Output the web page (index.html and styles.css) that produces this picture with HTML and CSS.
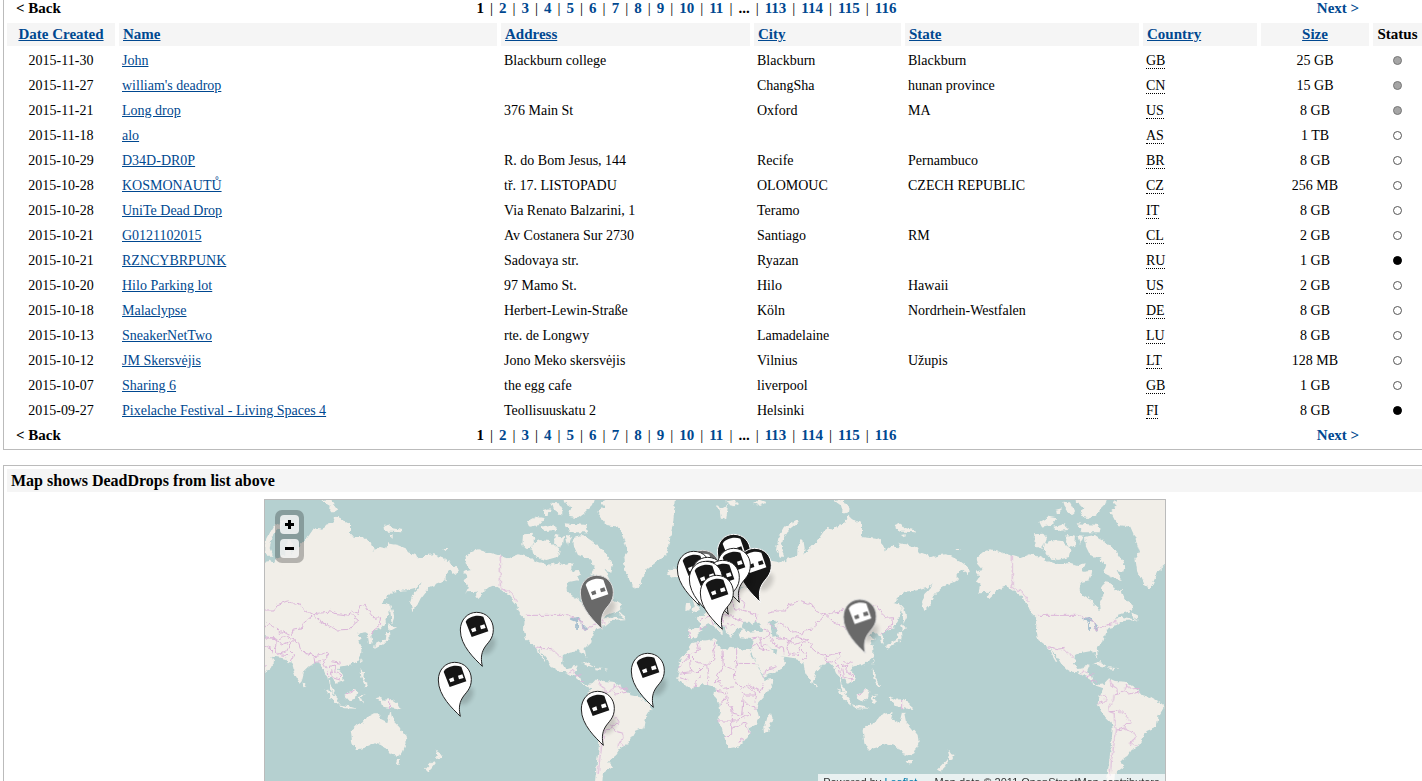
FILE: index.html
```html
<!DOCTYPE html>
<html lang="en">
<head>
<meta charset="utf-8">
<title>DeadDrops</title>
<link rel="stylesheet" href="styles.css">
</head>
<body>
<main class="page">
<section class="panel panel-list">
<nav class="pager"><span class="back">&lt; Back</span><span class="pages"><b>1</b><i>|</i><a href="#">2</a><i>|</i><a href="#">3</a><i>|</i><a href="#">4</a><i>|</i><a href="#">5</a><i>|</i><a href="#">6</a><i>|</i><a href="#">7</a><i>|</i><a href="#">8</a><i>|</i><a href="#">9</a><i>|</i><a href="#">10</a><i>|</i><a href="#">11</a><i>|</i><b>...</b><i>|</i><a href="#">113</a><i>|</i><a href="#">114</a><i>|</i><a href="#">115</a><i>|</i><a href="#">116</a></span><a class="next" href="#">Next &gt;</a></nav>
<table class="drops">
<colgroup><col class="c-date"><col class="c-name"><col class="c-addr"><col class="c-city"><col class="c-state"><col class="c-country"><col class="c-size"><col class="c-status"></colgroup>
<thead><tr><th><a href="#">Date Created</a></th><th><a href="#">Name</a></th><th><a href="#">Address</a></th><th><a href="#">City</a></th><th><a href="#">State</a></th><th><a href="#">Country</a></th><th><a href="#">Size</a></th><th>Status</th></tr></thead>
<tbody>
<tr><td>2015-11-30</td><td><a href="#">John</a></td><td>Blackburn college</td><td>Blackburn</td><td>Blackburn</td><td><abbr>GB</abbr></td><td>25 GB</td><td><span class="dot gray"></span></td></tr>
<tr><td>2015-11-27</td><td><a href="#">william's deadrop</a></td><td></td><td>ChangSha</td><td>hunan province</td><td><abbr>CN</abbr></td><td>15 GB</td><td><span class="dot gray"></span></td></tr>
<tr><td>2015-11-21</td><td><a href="#">Long drop</a></td><td>376 Main St</td><td>Oxford</td><td>MA</td><td><abbr>US</abbr></td><td>8 GB</td><td><span class="dot gray"></span></td></tr>
<tr><td>2015-11-18</td><td><a href="#">alo</a></td><td></td><td></td><td></td><td><abbr>AS</abbr></td><td>1 TB</td><td><span class="dot"></span></td></tr>
<tr><td>2015-10-29</td><td><a href="#">D34D-DR0P</a></td><td>R. do Bom Jesus, 144</td><td>Recife</td><td>Pernambuco</td><td><abbr>BR</abbr></td><td>8 GB</td><td><span class="dot"></span></td></tr>
<tr><td>2015-10-28</td><td><a href="#">KOSMONAUTŮ</a></td><td>tř. 17. LISTOPADU</td><td>OLOMOUC</td><td>CZECH REPUBLIC</td><td><abbr>CZ</abbr></td><td>256 MB</td><td><span class="dot"></span></td></tr>
<tr><td>2015-10-28</td><td><a href="#">UniTe Dead Drop</a></td><td>Via Renato Balzarini, 1</td><td>Teramo</td><td></td><td><abbr>IT</abbr></td><td>8 GB</td><td><span class="dot"></span></td></tr>
<tr><td>2015-10-21</td><td><a href="#">G0121102015</a></td><td>Av Costanera Sur 2730</td><td>Santiago</td><td>RM</td><td><abbr>CL</abbr></td><td>2 GB</td><td><span class="dot"></span></td></tr>
<tr><td>2015-10-21</td><td><a href="#">RZNCYBRPUNK</a></td><td>Sadovaya str.</td><td>Ryazan</td><td></td><td><abbr>RU</abbr></td><td>1 GB</td><td><span class="dot black"></span></td></tr>
<tr><td>2015-10-20</td><td><a href="#">Hilo Parking lot</a></td><td>97 Mamo St.</td><td>Hilo</td><td>Hawaii</td><td><abbr>US</abbr></td><td>2 GB</td><td><span class="dot"></span></td></tr>
<tr><td>2015-10-18</td><td><a href="#">Malaclypse</a></td><td>Herbert-Lewin-Straße</td><td>Köln</td><td>Nordrhein-Westfalen</td><td><abbr>DE</abbr></td><td>8 GB</td><td><span class="dot"></span></td></tr>
<tr><td>2015-10-13</td><td><a href="#">SneakerNetTwo</a></td><td>rte. de Longwy</td><td>Lamadelaine</td><td></td><td><abbr>LU</abbr></td><td>8 GB</td><td><span class="dot"></span></td></tr>
<tr><td>2015-10-12</td><td><a href="#">JM Skersvėjis</a></td><td>Jono Meko skersvėjis</td><td>Vilnius</td><td>Užupis</td><td><abbr>LT</abbr></td><td>128 MB</td><td><span class="dot"></span></td></tr>
<tr><td>2015-10-07</td><td><a href="#">Sharing 6</a></td><td>the egg cafe</td><td>liverpool</td><td></td><td><abbr>GB</abbr></td><td>1 GB</td><td><span class="dot"></span></td></tr>
<tr><td>2015-09-27</td><td><a href="#">Pixelache Festival - Living Spaces 4</a></td><td>Teollisuuskatu 2</td><td>Helsinki</td><td></td><td><abbr>FI</abbr></td><td>8 GB</td><td><span class="dot black"></span></td></tr>
</tbody>
</table>
<nav class="pager pager-bottom"><span class="back">&lt; Back</span><span class="pages"><b>1</b><i>|</i><a href="#">2</a><i>|</i><a href="#">3</a><i>|</i><a href="#">4</a><i>|</i><a href="#">5</a><i>|</i><a href="#">6</a><i>|</i><a href="#">7</a><i>|</i><a href="#">8</a><i>|</i><a href="#">9</a><i>|</i><a href="#">10</a><i>|</i><a href="#">11</a><i>|</i><b>...</b><i>|</i><a href="#">113</a><i>|</i><a href="#">114</a><i>|</i><a href="#">115</a><i>|</i><a href="#">116</a></span><a class="next" href="#">Next &gt;</a></nav>
</section>
<section class="panel panel-map">
<h2 class="map-title">Map shows DeadDrops from list above</h2>
<div class="map">
<svg class="map-svg" viewBox="265 500 900 291" role="img" aria-label="World map with dead drop pins">
<defs>
<filter id="coast" x="-5%" y="-5%" width="110%" height="110%"><feTurbulence type="fractalNoise" baseFrequency="0.22" numOctaves="2" seed="4" result="n"/><feDisplacementMap in="SourceGraphic" in2="n" scale="5" xChannelSelector="R" yChannelSelector="G"/></filter>
<filter id="soft" x="-50%" y="-50%" width="200%" height="200%"><feGaussianBlur stdDeviation="6"/></filter>
<g id="world">
<g transform="translate(660 495) scale(.33333)">
<g fill="#f1eee8">
<path d="M84 432L86 398L118 401L121 385L106 368L128 362L148 342L160 330L165 305L174 298L174 325L205 328L215 318L218 300L232 282L255 277L228 272L220 262L222 240L238 225L232 213L220 225L205 245L198 265L200 285L190 305L182 312L175 290L160 287L148 287L147 262L165 240L185 200L210 172L240 162L262 172L300 190L315 205L333 197L350 200L365 197L378 202L385 188L400 183L412 182L412 160L420 138L430 134L434 160L430 180L440 190L424 203L420 215L434 218L442 200L452 188L445 170L462 168L455 155L478 128L498 100L523 105L533 90L553 85L563 62L580 75L606 85V480H400L370 478L350 463L335 462L322 450L350 480L372 486L378 505L360 522L340 535L310 545L300 525L285 495L272 468L275 450L278 432L240 430L236 415L250 405L238 400L225 408L212 428L200 415L192 395L172 385L160 378L165 388L188 408L188 420L175 405L160 392L145 388L130 395L125 405L112 420L105 433Z"/>
<path d="M97 440L120 438L160 433L172 435L168 448L185 460L205 465L212 455L230 460L255 465L270 462L272 480L290 505L300 530L312 554L341 552L338 567L315 600L295 622L290 640L298 670L290 685L270 695L268 715L255 735L235 755L205 760L195 735L185 700L172 675L180 650L178 625L162 605L165 585L155 572L130 568L105 580L85 580L65 560L52 548L58 520L55 505L70 480L85 465L90 450Z"/>
<path d="M333 655L338 670L325 710L312 715L310 695L318 672ZM20 235L35 222L60 220L75 235L60 245L40 248ZM348 165L355 130L375 95L412 73L416 80L385 105L370 130L365 160L376 185L360 185ZM95 300L110 295L106 320L120 345L92 352L104 335ZM78 325L90 320L92 342L76 345ZM168 30L190 38L204 30L198 78L185 70L182 45ZM195 20L225 14L236 26L222 34L208 30ZM280 25L300 15L318 22L300 30ZM520 15L550 12L558 40L570 45L562 52L546 52L548 35Z"/>
</g>
<g fill="#b5d0d0"><path d="M245 400L250 380L268 380L275 388L290 378L305 395L308 408L285 408L262 411ZM324 382L340 373L355 380L343 388L350 405L354 425L338 428L334 405Z"/></g>
</g>
<g fill="#f1eee8" transform="translate(776 495) scale(.33333)">
<path d="M60 200L105 155L135 125L150 100L175 105L185 90L205 85L215 62L232 75L258 85L258 105L240 120L222 142L250 122L275 125L300 128L318 140L330 167L345 155L365 160L372 145L400 150L425 160L432 172L455 180L460 190L490 180L510 178L540 190L565 208L585 225L575 240L555 225L545 238L545 255L535 262L500 275L485 290L470 310L460 330L445 348L438 325L445 300L460 285L470 265L455 278L430 285L385 290L370 305L352 324L376 330L378 345L365 380L350 400L335 405L320 412L326 445L315 445L312 425L303 412L285 415L278 425L297 430L283 436L292 460L292 480L280 500L262 508L245 512L228 515L222 525L235 535L240 555L225 560L215 567L205 550L195 545L196 568L205 578L215 600L205 595L195 573L190 545L180 535L170 510L158 500L150 505L135 515L120 530L115 550L108 568L95 545L85 520L82 500L75 505L65 492L50 488L0 482Z"/>
<path d="M378 330L386 342L390 366L383 387L380 360ZM372 388L396 398L378 408ZM375 410L377 430L360 445L330 461L332 450L348 442L365 433L368 412ZM260 705L275 690L300 680L310 665L330 655L350 655L345 672L370 685L378 652L384 650L390 680L405 695L425 720L428 745L415 775L400 782L380 778L365 755L330 745L300 758L275 764L265 745ZM392 795L408 795L402 810ZM515 763L525 776L536 780L525 795L516 793L519 778ZM511 795L515 805L495 830L485 822ZM183 580L202 592L226 620L222 630L205 615ZM222 628L262 635L282 641L240 640ZM242 598L260 590L270 578L280 590L275 610L255 618L244 612ZM285 603L305 598L292 608L300 625L287 620ZM290 522L300 532L298 548L312 572L304 574L292 550ZM335 610L345 607L360 614L382 612L400 625L412 645L385 640L355 635L350 620ZM115 562L126 575L118 577ZM293 490L296 498L290 508ZM358 90L375 86L385 100L416 105L415 112L385 110L372 110L360 104ZM538 162L555 162L545 168ZM175 15L202 18L224 45L208 55L200 28ZM375 120L386 118L386 128ZM0 490L30 498L20 520L0 530Z"/>
</g>
<g transform="translate(990 495) scale(.33333)">
<g fill="#f1eee8">
<path d="M-40 187L-20 170L0 163L25 170L67 182L90 190L120 178L150 185L180 200L210 210L240 203L262 210L284 205L278 225L305 238L298 256L270 262L265 285L280 300L305 315L320 340L332 345L330 320L340 300L336 275L345 262L365 265L378 287L395 285L405 315L428 330L430 345L410 352L385 360L376 372L397 365L442 374L425 362L425 352L440 362L442 376L398 378L380 393L355 400L345 415L340 440L320 460L325 490L315 475L300 466L275 470L255 480L252 505L262 522L280 520L287 510L299 512L290 533L304 545L309 562L325 570L340 568L357 550L375 558L405 560L435 578L455 600L480 605L518 628L520 640L505 665L500 695L470 708L455 735L440 757L425 765L415 780L390 800L402 815L375 835L372 870L350 870L355 820L362 760L368 700L365 685L345 665L323 625L330 600L340 580L318 572L302 556L285 542L265 532L245 530L220 515L205 490L180 460L202 500L197 500L172 455L165 450L145 435L138 405L140 370L125 355L115 330L90 300L60 280L45 272L30 278L10 300L0 310L-8 302L0 290L12 280L25 273L0 290L-35 292L-30 270L-43 262L-32 245L-45 230L-20 225L-37 205Z"/>
<path d="M361 50L380 35L366 20L396 5L591 5L586 80L576 130L566 175L536 200L506 225L481 282L461 270L441 225L436 190L450 170L436 130L421 95L386 90L374 75ZM135 118L160 116L170 130L160 155L145 162L133 150ZM165 145L185 135L215 138L245 165L240 185L205 195L175 188L160 165ZM285 125L315 120L345 140L375 165L405 210L400 230L380 225L395 255L370 250L340 235L350 215L330 190L300 180L288 155ZM148 80L175 65L200 70L185 90L155 95ZM190 95L225 88L235 105L200 108ZM260 85L325 90L330 112L275 112ZM255 0L355 0L345 30L320 55L300 70L270 65L280 35L258 22ZM220 20L240 22L255 50L245 60L228 45ZM195 45L215 40L212 60L198 60ZM230 120L258 125L255 150L240 160L228 145ZM262 120L280 122L270 150ZM280 228L300 225L310 238L290 243ZM310 505L330 502L352 517L335 514ZM355 517L376 519L370 524L355 523ZM380 520L390 521L382 524Z"/>
</g>
<path fill="#a7c0cf" d="M275 370L300 366L312 380L300 378L300 405L294 404L295 382L280 376ZM310 382L328 400L320 408L312 395Z"/>
</g>
</g>
<g id="borders" fill="none" stroke="#dbb5d9" stroke-width="3" stroke-linejoin="round">
<g transform="translate(776 495) scale(.33333)">
<path d="M-24 355L0 348L30 348L38 330L70 318L95 328L105 325L120 345L148 360L118 385L115 402L85 405L78 420L60 410L45 412L35 400L12 385L0 400L-25 385M148 360L160 355L192 352L197 343L213 355L250 360L265 350L282 355L290 335L302 331L318 355L330 370L350 368L345 395L330 405L318 418M148 360L165 375L185 388L220 405L255 403L270 385L285 375L265 360M0 430L30 428L38 440L60 425L78 430L92 435L75 450L68 470L40 478L33 460L38 435M92 435L105 445L108 460L125 475L150 482L172 478L190 472L192 485L175 498L190 520L195 545M78 465L92 480L82 498M150 485L152 502L168 500M195 515L215 510L212 530L230 540L228 555L205 548L200 520M202 500L230 505M377 612V640M245 600L272 585"/>
</g>
<g transform="translate(660 495) scale(.33333)">
<path d="M86 408L92 432M118 402L140 398M120 375L150 362L160 390M150 362L152 345M168 328L172 350L190 360L215 360L222 375L240 370L250 385M190 360L185 385L200 400L205 385L225 395M215 318L225 345L250 345L265 350L290 358L290 380M232 282L240 310L255 325L250 345M240 270L245 230L240 180M170 310L165 280L185 240L225 190M310 405L330 410L325 425L278 432M300 432L305 455L322 450M275 455L290 445L300 460L330 470M330 428L345 450L370 460L372 475M352 425L385 432L400 450L425 440M310 545L315 525L350 515M114 440L118 465L70 485M165 440L160 460L165 490L140 512L110 500L90 480L55 520M185 462L190 510L175 540L165 560M230 460V505L285 506M230 505L222 550L240 575L265 575L290 600L285 620M190 510L222 525M88 485L92 530L58 535M92 530L110 535L130 515L140 512L145 540L140 568M105 580L110 550L125 545M60 548L85 558M165 560L180 560L190 580L222 575M165 585L190 590L200 605L180 630M200 590L205 610L200 625L215 635L220 655L245 660L250 600L240 575M250 600L275 600L290 600M250 615L270 635L290 640M172 678H232L245 668L270 660L268 650M215 635L218 680M215 680V715L205 725L192 725M215 700L240 690L255 682L262 700L268 715M240 735L247 732L245 740L238 738ZM312 565L300 590L265 570M400 480L425 482"/>
</g>
<g transform="translate(990 495) scale(.33333)">
<path d="M67 182V278L85 290L90 283L117 318M145 361H265L290 370L312 380L318 405L345 392L370 385L375 372L382 388M172 455L205 462L220 460L235 475L250 488M275 535L283 525L290 535M290 545L310 538M305 560L320 556M360 555L365 570L380 580L382 598L372 600L370 620L355 635L358 650L390 648L410 665L422 678L422 688L402 688L402 700L380 705M330 600L350 605L345 620L325 625M382 598L400 590L410 570M410 570L425 582L445 580V592L415 597L405 590M358 650L372 655L375 690L380 705L372 745L365 790L360 840M402 700L420 710L435 715L438 730L425 738L440 755M425 738L420 755"/>
</g>
</g>
<path id="hood" d="M17 29C24 15 50 6 70 14L85 58L35 75Z"/>
<path id="drop" d="M50 1C80 1 100 24 100 52C100 82 83 91 73 108C62 126 63 145 67 163C45 141 1 102 1 54C1 24 22 1 50 1Z"/>
<path id="eyes" d="M33 51L46 46L49 57L37 61ZM60 41L73 37L77 48L63 52Z"/>
<ellipse id="shade" cx="84" cy="102" rx="18" ry="30" transform="rotate(35 84 102)" fill="#000" opacity=".16" filter="url(#soft)"/>
<g id="pin-white"><use href="#shade"/><use href="#drop" fill="#fff" stroke="#222" stroke-width="3"/><use href="#hood" fill="#161616"/><use href="#eyes" fill="#fff"/></g>
<g id="pin-black"><use href="#shade"/><use href="#drop" fill="#161616" stroke="#fff" stroke-width="3"/><use href="#hood" fill="#fff"/><use href="#eyes" fill="#161616"/></g>
<g id="pin-gray"><use href="#shade"/><use href="#drop" fill="#696969" stroke="#dedede" stroke-width="3"/><use href="#hood" fill="#fff"/><use href="#eyes" fill="#696969"/></g>
</defs>
<rect x="265" y="500" width="900" height="291" fill="#b5d0d0"/>
<g filter="url(#coast)"><use href="#world" x="-512"/><use href="#world" x="-1024"/><use href="#world"/></g>
<g filter="url(#coast)"><use href="#borders" x="-512"/><use href="#borders" x="-1024"/><use href="#borders"/></g>
<use href="#pin-white" transform="translate(460 612) scale(.33333)"/>
<use href="#pin-white" transform="translate(438 662) scale(.33333)"/>
<use href="#pin-gray" transform="translate(580 575) scale(.33333)"/>
<use href="#pin-white" transform="translate(631 653) scale(.33333)"/>
<use href="#pin-white" transform="translate(581 691) scale(.33333)"/>
<use href="#pin-gray" transform="translate(843 599) scale(.33333)"/>
<use href="#pin-black" transform="translate(717 534) scale(.33333)"/>
<use href="#pin-black" transform="translate(738 548) scale(.33333)"/>
<use href="#pin-gray" transform="translate(686 550) scale(.33333)"/>
<use href="#pin-white" transform="translate(677 551) scale(.33333)"/>
<use href="#pin-white" transform="translate(717 548) scale(.33333)"/>
<use href="#pin-white" transform="translate(691 557) scale(.33333)"/>
<use href="#pin-white" transform="translate(706 560) scale(.33333)"/>
<use href="#pin-white" transform="translate(689 561) scale(.33333)"/>
<use href="#pin-white" transform="translate(700 575) scale(.33333)"/>
</svg>
<div class="zoom"><button type="button" aria-label="Zoom in"><svg viewBox="0 0 9 9"><path d="M3 0h3v3h3v3H6v3H3V6H0V3h3z"/></svg></button><button type="button" aria-label="Zoom out"><svg viewBox="0 0 9 9"><path d="M0 3h9v3H0z"/></svg></button></div>
<p class="credit">Powered by <a href="#">Leaflet</a> — Map data © 2011 OpenStreetMap contributors</p>
</div>
</section>
</main>
</body>
</html>
```
FILE: styles.css
```css
* { box-sizing: border-box; }
body {
  margin: 0;
  height: 100vh;
  overflow: hidden;
  background: #fff;
  color: #000;
  font: 14px/17px Georgia, "Liberation Serif", serif;
}
a { color: #004890; }
.page { padding-left: 3px; }
.panel { border: 1px solid #bbb; border-right: 0; padding-left: 3px; }
.panel-list { border-top: 0; }
.pager {
  display: grid;
  grid-template-columns: 112px 1fr 168px;
  padding-bottom: 6px;
  font-size: 15px;
  font-weight: bold;
}
.pager a { text-decoration: none; }
.pager-bottom { padding: 4px 0 5px; }
.back { padding-left: 9px; }
.pages { display: flex; justify-content: center; gap: 6px; }
.pages i { font-style: normal; font-weight: normal; }
.next { text-align: center; }
.drops { width: 100%; table-layout: fixed; border-collapse: separate; border-spacing: 0; }
.c-date, .c-size { width: 112px; }
.c-addr { width: 253px; }
.c-city { width: 151px; }
.c-state { width: 238px; }
.c-country { width: 118px; }
.c-status { width: 49px; }
th {
  padding: 3px 4px;
  font-size: 15px;
  text-align: left;
  background: #f5f5f5;
  background-clip: padding-box;
  border-right: 4px solid transparent;
  border-bottom: 2px solid transparent;
}
td { height: 25px; padding: 4px 7px 4px 3px; white-space: nowrap; }
th:nth-child(1), th:nth-child(7), td:nth-child(1), td:nth-child(7) { text-align: center; }
th:last-child { border-right: 0; text-align: center; }
td:last-child { padding: 0; text-align: center; }
abbr { border-bottom: 1px dotted #000; }
.dot {
  display: block;
  width: 9px;
  height: 9px;
  margin: 0 auto;
  border: 1px solid #555;
  border-radius: 50%;
  background: #fff;
}
.gray { background: #a5a5a5; border-color: #777; }
.black { background: #000; border-color: #000; }
.panel-map { margin-top: 15px; padding-top: 3px; }
.map-title { margin: 0 0 7px; padding: 3px 4px; font-size: 16px; line-height: 17px; background: #f5f5f5; }
.map { position: relative; max-width: 902px; margin: 0 auto; border: 1px solid #bbb; }
.map-svg { display: block; width: 100%; }
.zoom {
  position: absolute;
  top: 10px;
  left: 10px;
  display: grid;
  gap: 5px;
  padding: 5px;
  border-radius: 7px;
  background: rgba(0, 0, 0, .25);
}
.zoom button {
  display: grid;
  place-items: center;
  width: 19px;
  height: 19px;
  padding: 0;
  border: 0;
  border-radius: 4px;
  background: rgba(255, 255, 255, .8);
}
.zoom svg { width: 9px; height: 9px; }
.credit {
  position: absolute;
  right: 0;
  bottom: 0;
  margin: 0;
  padding: 0 5px;
  font: 11px/17px "Liberation Sans", sans-serif;
  color: #333;
  background: rgba(255, 255, 255, .7);
}
.credit a { color: #0078a8; }
```
